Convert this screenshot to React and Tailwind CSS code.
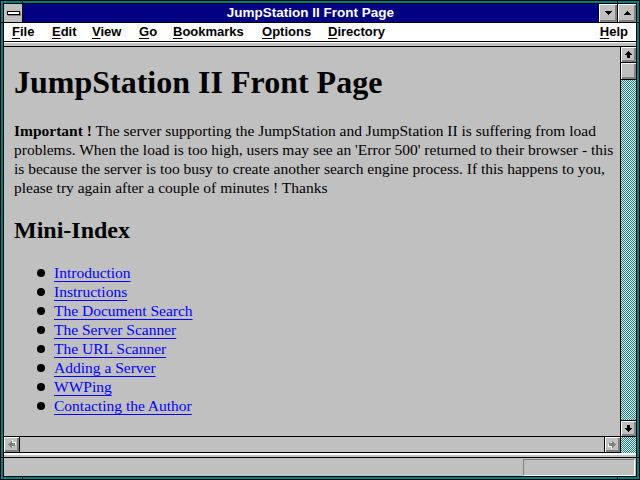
import React from "react";

const links = [
  "Introduction",
  "Instructions",
  "The Document Search",
  "The Server Scanner",
  "The URL Scanner",
  "Adding a Server",
  "WWPing",
  "Contacting the Author",
];

// fixed widths so every menu title starts where the screenshot has it
const menus = [
  { key: "F", rest: "ile", w: "w-[40px]" },
  { key: "E", rest: "dit", w: "w-[40px]" },
  { key: "V", rest: "iew", w: "w-[47px]" },
  { key: "G", rest: "o", w: "w-[34px]" },
  { key: "B", rest: "ookmarks", w: "w-[89px]" },
  { key: "O", rest: "ptions", w: "w-[66px]" },
  { key: "D", rest: "irectory", w: "w-[70px]" },
];

const ARROW = "M7 4h1v1h1v1h1v1h1v1H4V7h1V6h1V5h1zM6 8h3v3H6z";

function Arrow({ rotate = 0, disabled = false }) {
  return (
    <svg width="15" height="15" viewBox="0 0 15 15" shapeRendering="crispEdges">
      <g transform={`rotate(${rotate} 7.5 7.5)`}>
        {disabled && <path d={ARROW} fill="#ffffff" transform="translate(1 1)" />}
        <path d={ARROW} fill={disabled ? "#808080" : "#000000"} />
      </g>
    </svg>
  );
}

function Tri({ down }) {
  return (
    <svg width="9" height="5" viewBox="0 0 9 5" shapeRendering="crispEdges">
      <path d={down ? "M1 0h7v1H7v1H6v1H5v1H4V3H3V2H2V1H1z" : "M4 0h1v1h1v1h1v1h1v1H1V3h1V2h1V1h1z"} fill="#000" />
    </svg>
  );
}

const bevel = "bg-[#c0c0c0] shadow-[inset_1px_1px_0_#ffffff,inset_-2px_-2px_0_#808080]";
const checker = "bg-[repeating-conic-gradient(#008080_0%_25%,#ffffff_0%_50%)] bg-[length:2px_2px]";

export default function App() {
  return (
    <div className="relative w-[640px] h-[480px] bg-black p-px font-['Liberation_Sans',Arial,sans-serif]">
      <div className="h-full bg-[#008080] p-[2px]">
        <div className="h-full bg-black p-px">
          <div className="h-full flex flex-col bg-[#c0c0c0]">
            {/* title bar */}
            <div className="h-[18px] flex shrink-0">
              <div className="w-[18px] h-[18px] bg-[#c0c0c0] flex items-center justify-center">
                <div className="w-[13px] h-[4px] border border-black bg-white shadow-[1px_1px_0_#808080]"></div>
              </div>
              <div className="w-px bg-black"></div>
              <div className="flex-1 bg-[#000080] text-white font-bold text-[13.5px] leading-[18px] text-center">
                JumpStation II Front Page
              </div>
              <div className="w-px bg-black"></div>
              <div className={`w-[18px] h-[18px] flex items-center justify-center ${bevel}`}>
                <Tri down />
              </div>
              <div className="w-px bg-black"></div>
              <div className={`w-[18px] h-[18px] flex items-center justify-center ${bevel}`}>
                <Tri />
              </div>
            </div>
            <div className="h-px bg-black shrink-0"></div>

            {/* menu bar */}
            <div className="h-[18px] bg-white flex pl-[8px] pr-[8px] text-[13px] leading-[18px] font-bold text-black shrink-0">
              {menus.map((m) => (
                <div key={m.key} className={m.w}>
                  <span className="underline underline-offset-2">{m.key}</span>
                  {m.rest}
                </div>
              ))}
              <div className="ml-auto">
                <span className="underline underline-offset-2">H</span>elp
              </div>
            </div>
            <div className="h-px bg-black shrink-0"></div>
            <div className="h-[4px] bg-[#c0c0c0] border-t border-white shrink-0"></div>
            <div className="h-px bg-black shrink-0"></div>

            {/* document + scrollbars */}
            <div className="h-[406px] flex shrink-0">
              <div className="flex-1 flex flex-col min-w-0">
                <div className="flex-1 overflow-hidden pl-[10px] pt-[17px] font-['Liberation_Serif','Times_New_Roman',serif] text-black">
                  <h1 className="text-[32px] leading-[37px] font-bold whitespace-nowrap">JumpStation II Front Page</h1>
                  <p className="mt-[20px] text-[15.5px] leading-[19px] whitespace-nowrap">
                    <b>Important !</b> The server supporting the JumpStation and JumpStation II is suffering from load
                    <br />
                    problems. When the load is too high, users may see an 'Error 500' returned to their browser - this
                    <br />
                    is because the server is too busy to create another search engine process. If this happens to you,
                    <br />
                    please try again after a couple of minutes ! Thanks
                  </p>
                  <h2 className="mt-[19px] text-[24px] leading-[28px] font-bold">Mini-Index</h2>
                  <ul className="mt-[19px] pl-[23px] text-[15.5px] leading-[19px]">
                    {links.map((l) => (
                      <li key={l} className="flex items-center">
                        <span className="w-[8px] h-[8px] rounded-full bg-black mr-[9px]"></span>
                        <a href="#" className="text-[#0000ff] underline underline-offset-[3px]">
                          {l}
                        </a>
                      </li>
                    ))}
                  </ul>
                </div>
                {/* horizontal scrollbar */}
                <div className="h-[17px] flex border-y border-black shrink-0">
                  <div className={`w-[15px] flex items-center justify-center ${bevel}`}>
                    <Arrow rotate={-90} disabled />
                  </div>
                  <div className="w-px bg-black"></div>
                  <div className="flex-1 bg-[#c0c0c0]"></div>
                  <div className="w-px bg-black"></div>
                  <div className={`w-[15px] flex items-center justify-center ${bevel}`}>
                    <Arrow rotate={90} disabled />
                  </div>
                </div>
              </div>
              {/* vertical scrollbar */}
              <div className="w-[16px] border-l border-black flex flex-col shrink-0">
                <div className={`h-[15px] flex items-center justify-center ${bevel}`}>
                  <Arrow />
                </div>
                <div className="h-px bg-black"></div>
                <div className={`h-[16px] ${bevel}`}></div>
                <div className="h-px bg-black"></div>
                <div className={`flex-1 ${checker}`}></div>
                <div className="h-px bg-black"></div>
                <div className={`h-[15px] flex items-center justify-center ${bevel}`}>
                  <Arrow rotate={180} />
                </div>
                <div className="h-px bg-black"></div>
                <div className={`h-[16px] ${checker}`}></div>
              </div>
            </div>

            {/* status bar */}
            <div className="h-[2px] bg-white shrink-0"></div>
            <div className="h-[2px] bg-[#c0c0c0] shrink-0"></div>
            <div className="h-px bg-black shrink-0"></div>
            <div className="flex-1 flex justify-end items-start pt-[1px] pr-[1px]">
              <div className="w-[112px] h-[17px] border-t border-l border-[#808080] border-r border-b border-r-white border-b-white"></div>
            </div>
          </div>
        </div>
      </div>

      {/* resize-frame corner marks */}
      <div className="absolute left-[22px] top-0 w-px h-[4px] bg-black"></div>
      <div className="absolute left-[617px] top-0 w-px h-[4px] bg-black"></div>
      <div className="absolute left-[22px] bottom-0 w-px h-[4px] bg-black"></div>
      <div className="absolute left-[617px] bottom-0 w-px h-[4px] bg-black"></div>
      <div className="absolute left-0 top-[22px] w-[4px] h-px bg-black"></div>
      <div className="absolute right-0 top-[22px] w-[4px] h-px bg-black"></div>
      <div className="absolute left-0 top-[457px] w-[4px] h-px bg-black"></div>
      <div className="absolute right-0 top-[457px] w-[4px] h-px bg-black"></div>
    </div>
  );
}
